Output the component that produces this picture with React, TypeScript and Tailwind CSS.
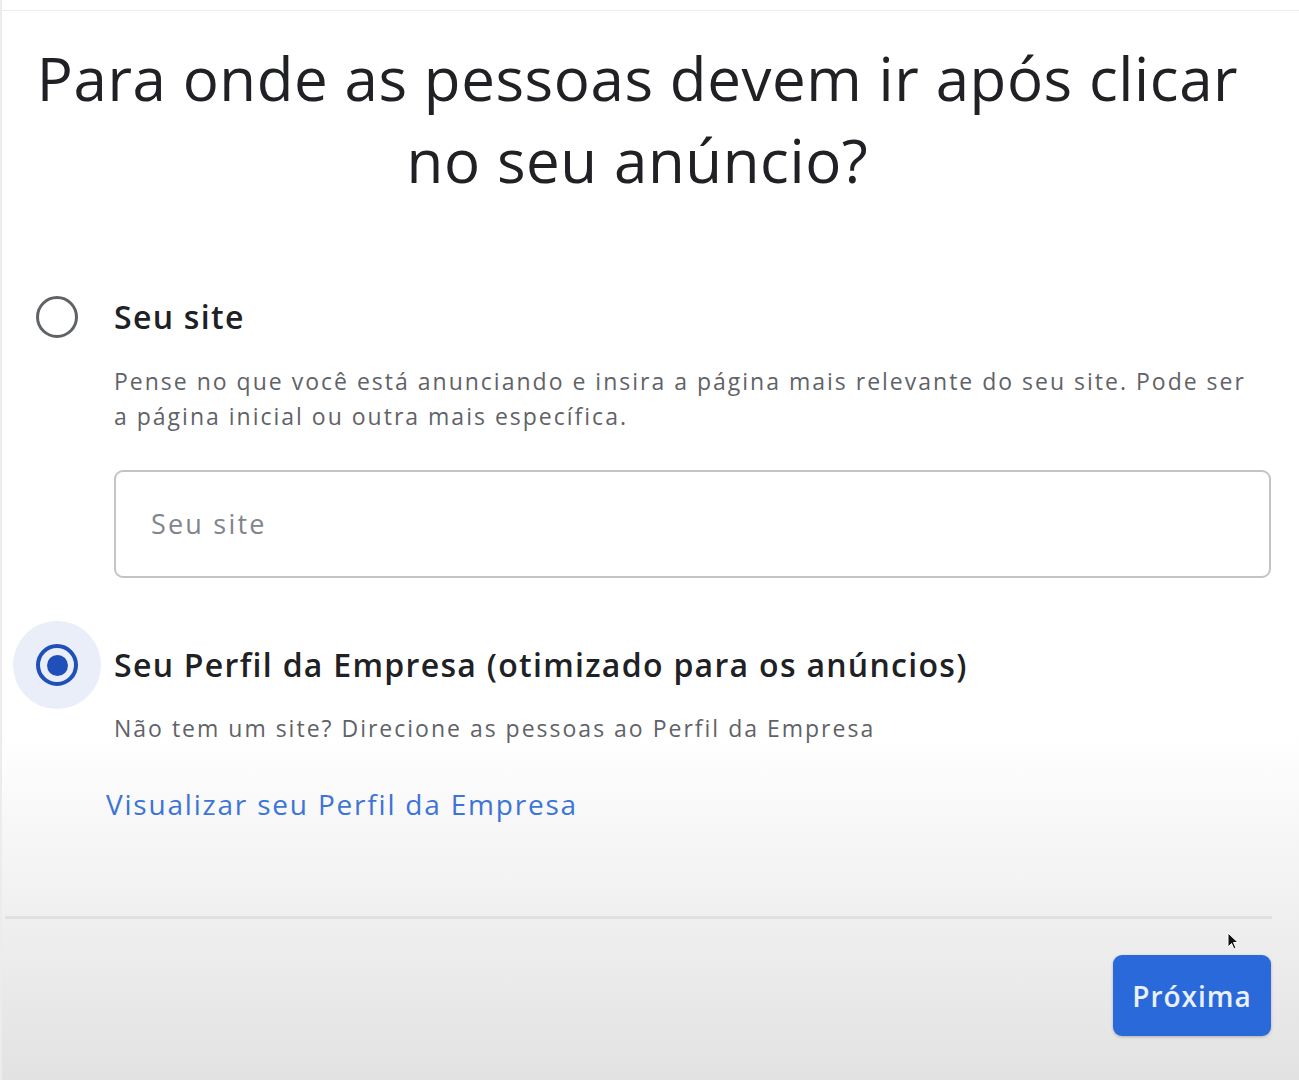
import { ReactNode } from 'react';

const FONT = { fontFamily: '"Open Sans", Roboto, "Liberation Sans", sans-serif' };

function Radio({ checked }: { checked?: boolean }) {
  if (checked) {
    return (
      <div className="flex h-[88px] w-[88px] items-center justify-center rounded-full bg-[#e9eef8]">
        <div className="flex h-[42px] w-[42px] items-center justify-center rounded-full border-[4px] border-[#1f4fb8]">
          <div className="h-[21px] w-[21px] rounded-full bg-[#1f4fb8]" />
        </div>
      </div>
    );
  }
  return (
    <div className="flex h-[88px] w-[88px] items-center justify-center">
      <div className="h-[42px] w-[42px] rounded-full border-[3px] border-[#5f6368]" />
    </div>
  );
}

function Option({ checked, label, children }: { checked?: boolean; label: string; children?: ReactNode }) {
  return (
    <div className="flex flex-col">
      <div className="flex items-center">
        <div className="ml-[11px] mr-[13px]">
          <Radio checked={checked} />
        </div>
        <span className="text-[32px] font-semibold tracking-[1.3px] text-[#202124]">{label}</span>
      </div>
      <div className="pl-[112px]">{children}</div>
    </div>
  );
}

export default function App() {
  return (
    <div
      style={FONT}
      className="relative flex h-[1080px] w-[1299px] flex-col overflow-hidden border-l-[2px] border-[#ececec] bg-gradient-to-b from-white from-[68%] to-[#e2e2e2]"
    >
      <div className="mt-[10px] h-px w-full bg-[#eeeeee]" />

      {/* Title */}
      <h1 className="mt-[26px] pr-[26px] text-center text-[60px] font-normal leading-[82px] tracking-[0.6px] text-[#202124]">
        Para onde as pessoas devem ir após clicar
        <br />
        no seu anúncio?
      </h1>

      {/* Options */}
      <div className="mt-[72px] flex flex-col">
        <Option label="Seu site">
          <p className="mt-[3px] pr-[46px] text-[23px] font-medium leading-[35px] tracking-[2px] text-[#5f6368]">
            Pense no que você está anunciando e insira a página mais relevante do seu site. Pode ser a página inicial ou
            outra mais específica.
          </p>
          <div className="mr-[28px] mt-[36px] flex h-[108px] items-center rounded-[9px] border-[2px] border-[#c4c4c4] bg-white px-[35px]">
            <span className="text-[27px] tracking-[2.2px] text-[#80868b]">Seu site</span>
          </div>
        </Option>

        <div className="mt-[43px]">
          <Option checked label="Seu Perfil da Empresa (otimizado para os anúncios)">
            <p className="mt-[2px] text-[23px] font-medium leading-[35px] tracking-[2px] text-[#5f6368]">
              Não tem um site? Direcione as pessoas ao Perfil da Empresa
            </p>
            <a className="-ml-[8px] mt-[37px] block text-[28px] font-medium tracking-[1.8px] text-[#3d74d6]">
              Visualizar seu Perfil da Empresa
            </a>
          </Option>
        </div>
      </div>

      {/* Footer */}
      <div className="mt-auto mb-[44px] flex flex-col">
        <div className="ml-[3px] mr-[27px] h-[3px] bg-[#e0e0e0]" />
        <div className="mr-[28px] mt-[36px] flex justify-end">
          <button className="h-[81px] w-[158px] rounded-[9px] bg-[#2a69d9] text-[28px] font-semibold tracking-[1px] text-[#eaf1fd] shadow-[0_1px_3px_rgba(0,0,0,0.25)]">
            Próxima
          </button>
        </div>
      </div>

      {/* mouse cursor */}
      <svg className="absolute left-[1225px] top-[932px]" width="14" height="20" viewBox="0 0 14 20">
        <path d="M1 1 L1 15 L4.5 11.5 L7 17 L9 16 L6.5 10.5 L11 10.5 Z" fill="#111" stroke="#fff" strokeWidth="1" />
      </svg>
    </div>
  );
}
